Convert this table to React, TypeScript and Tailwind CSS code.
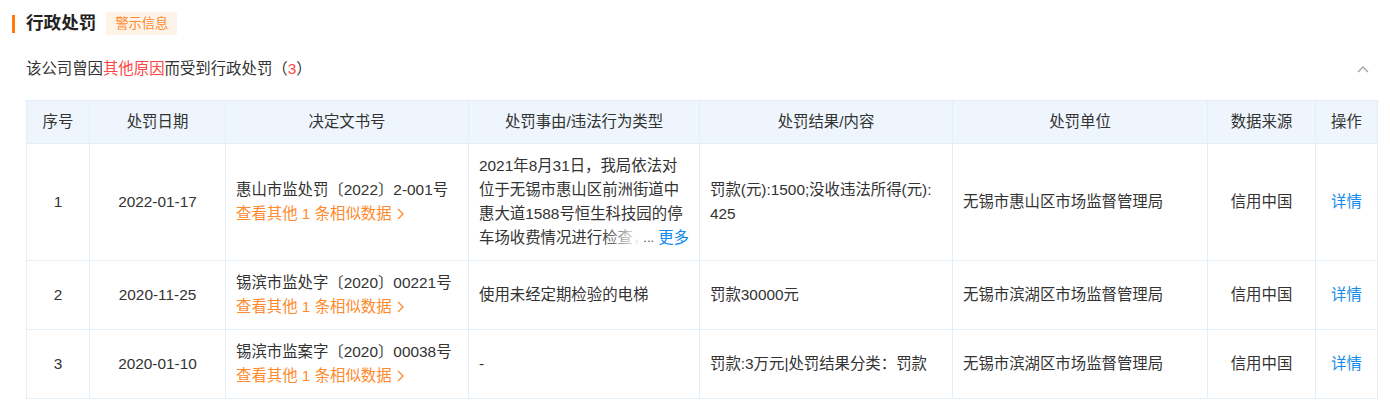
import React from "react";

const FONT = '"Liberation Sans", Arial, "Noto Sans CJK SC", sans-serif';

interface Penalty {
	id: number;
	date: string;
	docNo: string;
	reason: string;
	reasonLong?: boolean;
	result: React.ReactNode;
	org: string;
	source: string;
}

const rows: Penalty[] = [
	{
		id: 1,
		date: "2022-01-17",
		docNo: "惠山市监处罚〔2022〕2-001号",
		reason:
			"2021年8月31日，我局依法对位于无锡市惠山区前洲街道中惠大道1588号恒生科技园的停车场收费情况进行检查，发现当事人未按规定明码标价。",
		reasonLong: true,
		result: (
			<>
				罚款(元):1500;没收违法所得(元):
				<br />
				425
			</>
		),
		org: "无锡市惠山区市场监督管理局",
		source: "信用中国",
	},
	{
		id: 2,
		date: "2020-11-25",
		docNo: "锡滨市监处字〔2020〕00221号",
		reason: "使用未经定期检验的电梯",
		result: "罚款30000元",
		org: "无锡市滨湖区市场监督管理局",
		source: "信用中国",
	},
	{
		id: 3,
		date: "2020-01-10",
		docNo: "锡滨市监案字〔2020〕00038号",
		reason: "-",
		result: "罚款:3万元|处罚结果分类：罚款",
		org: "无锡市滨湖区市场监督管理局",
		source: "信用中国",
	},
];

const headers = [
	{ label: "序号", w: "w-[63px]" },
	{ label: "处罚日期", w: "w-[136px]" },
	{ label: "决定文书号", w: "w-[243px]" },
	{ label: "处罚事由/违法行为类型", w: "w-[231px]" },
	{ label: "处罚结果/内容", w: "w-[253px]" },
	{ label: "处罚单位", w: "w-[255px]" },
	{ label: "数据来源", w: "w-[108px]" },
	{ label: "操作", w: "w-[62px]" },
];

const ChevronRight = () => (
	<svg width="7" height="12" viewBox="0 0 7 12" className="ml-[5px] inline-block">
		<path d="M1 1l5 5-5 5" fill="none" stroke="#ff8a2d" strokeWidth="1.3" />
	</svg>
);

const td = "border border-[#e4eef6] px-[10px] py-[10px] align-middle";

export default function App() {
	return (
		<div
			className="bg-white text-[#333] pl-[12px] pr-[13px] pt-[12px] pb-[10px]"
			style={{ fontFamily: FONT }}
		>
			<div className="flex items-center h-[23px]">
				<div className="w-[3px] h-[18px] bg-[#ff7a12]" />
				<h3 className="ml-[11px] text-[17.6px] font-bold text-[#222] leading-none">
					行政处罚
				</h3>
				<span className="ml-[10px] h-[23px] px-[9px] flex items-center rounded-[2px] bg-[#fef3e9] text-[#ff8a2d] text-[13.2px]">
					警示信息
				</span>
			</div>

			<div className="mt-[22px] pl-[14px] flex items-center justify-between h-[24px] text-[15.4px]">
				<div>
					该公司曾因<span className="text-[#fd4646]">其他原因</span>
					而受到行政处罚（<span className="text-[#fd4646]">3</span>）
				</div>
				<svg width="12" height="8" viewBox="0 0 12 8" className="mr-[8px]">
					<path d="M1 7l5-5 5 5" fill="none" stroke="#9aa2ab" strokeWidth="1.4" />
				</svg>
			</div>

			<table className="mt-[19px] ml-[14px] table-fixed border-collapse w-[1351px] text-[15.4px] leading-[24px]">
				<colgroup>
					{headers.map((h) => (
						<col key={h.label} className={h.w} />
					))}
				</colgroup>
				<thead>
					<tr className="bg-[#eef5fc]">
						{headers.map((h) => (
							<th
								key={h.label}
								className="border border-[#e4eef6] py-[9px] font-normal text-center"
							>
								{h.label}
							</th>
						))}
					</tr>
				</thead>
				<tbody>
					{rows.map((r) => (
						<tr key={r.id}>
							<td className={`${td} text-center`}>{r.id}</td>
							<td className={`${td} text-center`}>{r.date}</td>
							<td className={td}>
								<div>{r.docNo}</div>
								<div className="text-[#ff8a2d] flex items-center">
									查看其他 1 条相似数据
									<ChevronRight />
								</div>
							</td>
							<td className={td}>
								{r.reasonLong ? (
									<div className="relative max-h-[96px] overflow-hidden">
										{r.reason}
										<div className="absolute right-0 bottom-0 h-[24px] flex items-center">
											<div className="w-[40px] h-full bg-gradient-to-r from-white/0 to-white" />
											<div className="bg-white h-full flex items-center pl-[2px]">
												<span className="text-[#555] text-[13px] mr-[4px]">...</span>
												<span className="text-[#128bed]">更多</span>
											</div>
										</div>
									</div>
								) : (
									r.reason
								)}
							</td>
							<td className={td}>{r.result}</td>
							<td className={td}>{r.org}</td>
							<td className={`${td} text-center`}>{r.source}</td>
							<td className={`${td} text-center`}>
								<span className="text-[#128bed]">详情</span>
							</td>
						</tr>
					))}
				</tbody>
			</table>
		</div>
	);
}
